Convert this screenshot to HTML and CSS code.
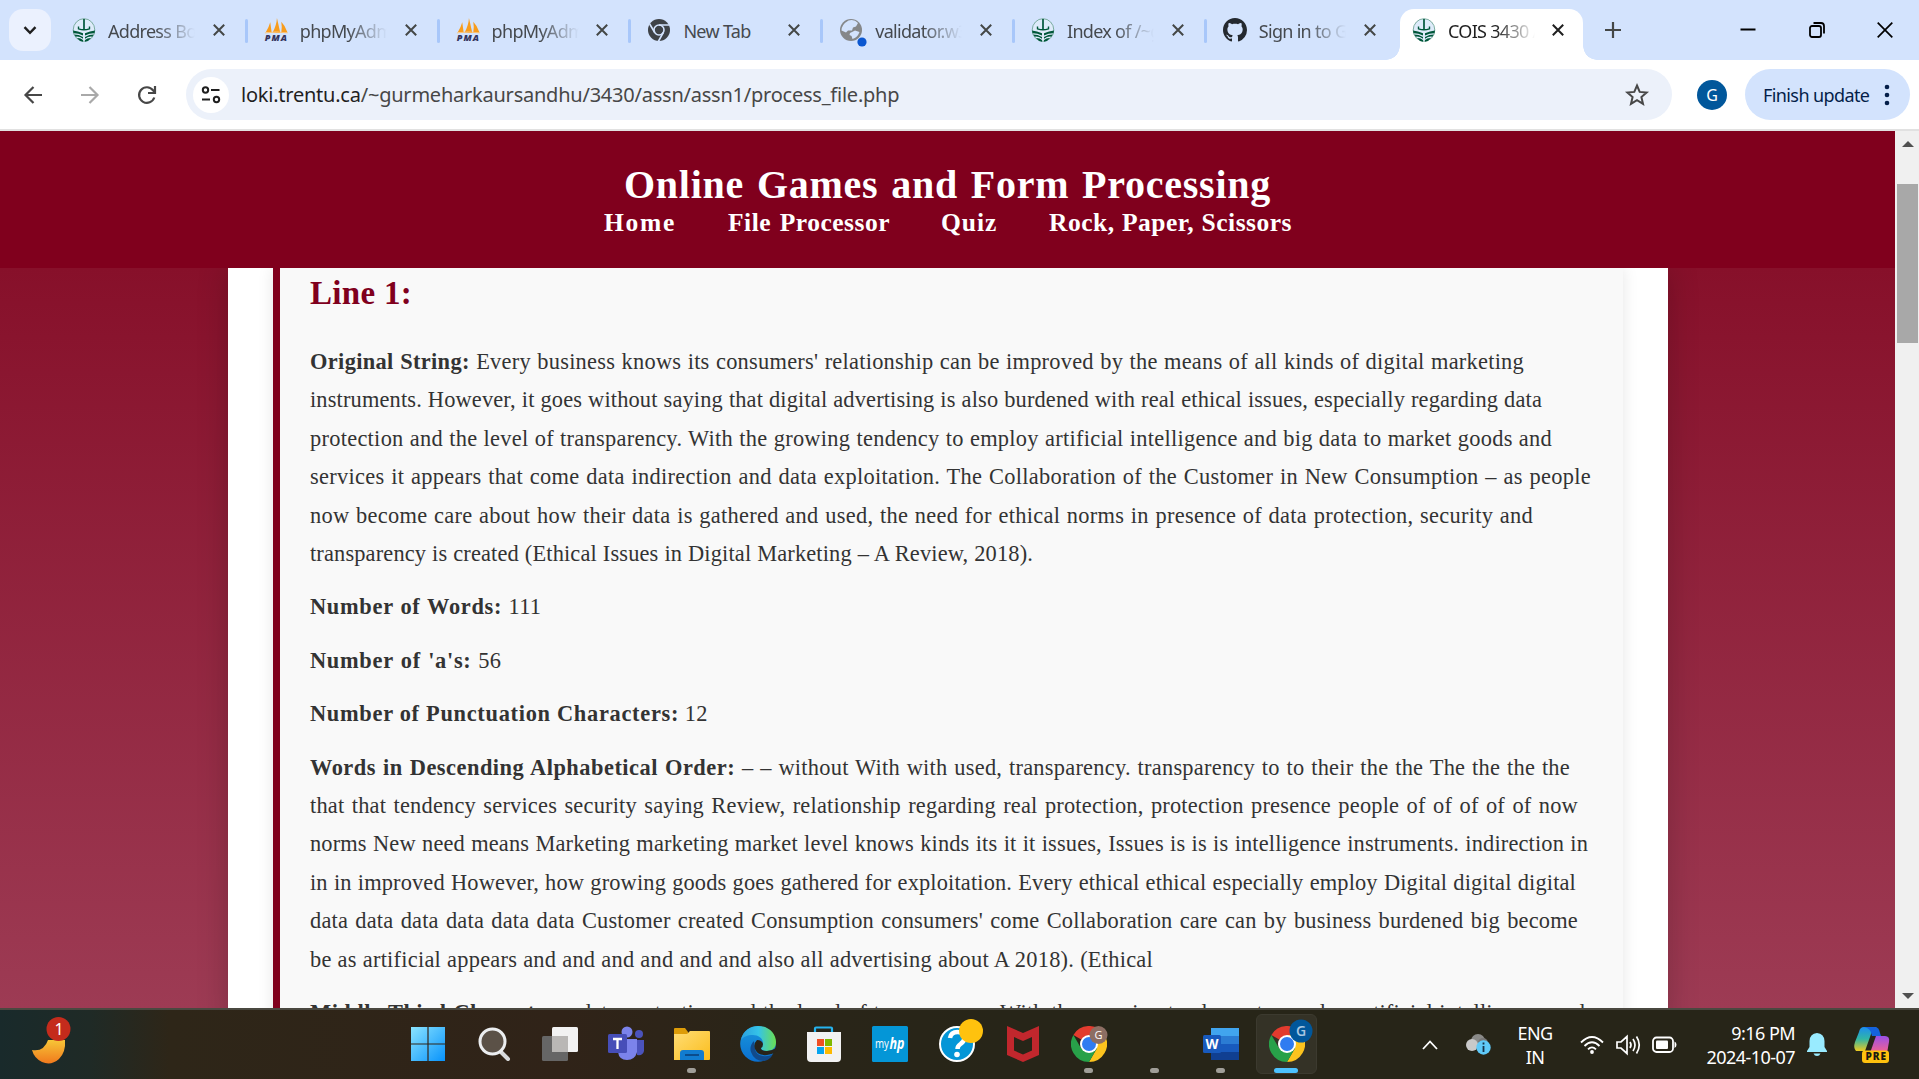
FILE: index.html
```html
<!DOCTYPE html>
<html lang="en">
<head>
<meta charset="utf-8">
<title>COIS 3430</title>
<link rel="stylesheet" href="styles.css">
</head>
<body>
<svg class="defs" aria-hidden="true">
  <defs>
    <linearGradient id="gWin" x1="0" y1="0" x2="1" y2="1"><stop offset="0" stop-color="#8be4ff"/><stop offset="1" stop-color="#0893fb"/></linearGradient>
    <linearGradient id="gMoon" x1="0" y1="0" x2="0" y2="1"><stop offset="0" stop-color="#f7c637"/><stop offset="1" stop-color="#f0791d"/></linearGradient>
    <linearGradient id="gFold" x1="0" y1="0" x2="1" y2="1"><stop offset="0" stop-color="#ffdd75"/><stop offset="1" stop-color="#fbbd1d"/></linearGradient>
    <linearGradient id="gEdgeTop" x1="0" y1="0" x2="1" y2="0"><stop offset="0" stop-color="#2a9fdf"/><stop offset=".5" stop-color="#35c3e8"/><stop offset="1" stop-color="#6ade52"/></linearGradient>
    <linearGradient id="gEdge" x1="0" y1="0" x2="0" y2="1"><stop offset="0" stop-color="#1a97dc"/><stop offset="1" stop-color="#0a6fd0"/></linearGradient>
    <linearGradient id="gCopA" x1="0" y1="0" x2="0" y2="1"><stop offset="0" stop-color="#1c8df0"/><stop offset=".5" stop-color="#31b6a5"/><stop offset="1" stop-color="#efca1f"/></linearGradient>
    <linearGradient id="gCopB" x1="0" y1="0" x2="0" y2="1"><stop offset="0" stop-color="#9a50e8"/><stop offset="1" stop-color="#f6638b"/></linearGradient>
    <symbol id="close" viewBox="0 0 12 12"><path d="M.8.8 11.2 11.2M11.2.8.8 11.2" stroke="currentColor" stroke-width="2" fill="none"/></symbol>
    <symbol id="trent" viewBox="0 0 24 24">
      <ellipse cx="12" cy="12" rx="10.800" ry="11.300" fill="#deebfa" stroke="#6fa595" stroke-width=".9"/>
      <path d="M12 1v11" stroke="#00573a" stroke-width="1.700"/>
      <path d="M6.500 8.500v2.300q5.500 2 11 0V8.500" fill="none" stroke="#00573a" stroke-width="1.400"/>
      <g fill="#00573a"><path d="M1 12.500q5 .5 10 2.700v2.300q-5-2.500-9.500-2.300zM23 12.500q-5 .5-10 2.700v2.300q5-2.500 9.500-2.300z"/><path d="M2.200 16.500q4.500 0 8.800 2.400v1.800q-3.500-2.500-7.200-2zM21.800 16.500q-4.500 0-8.800 2.400v1.800q3.500-2.500 7.200-2z"/><path d="M5 20q3.500-.2 6 2v1.800q-3.500-.4-6-3.800zM19 20q-3.500-.2-6 2v1.800q3.500-.4 6-3.800z"/></g>
    </symbol>
    <symbol id="pma" viewBox="0 0 25 25">
      <path d="M2 14.500Q5 10 6.500 4.500L8 15zM9 15Q13 8 13.500 0L17 15.500zM18 15.500Q19 9 18 4q4 4 6.500 11z" fill="#f89c1c"/>
      <path d="M1 15.500q12-2 23.500 0" stroke="#fbc479" fill="none"/>
      <text x="12.300" y="24" text-anchor="middle" textLength="23" font-family="Open Sans, sans-serif" font-size="9.500" font-style="italic" font-weight="800" fill="#34345c">PMA</text>
    </symbol>
    <symbol id="chrome" viewBox="0 0 36 36">
      <path d="M18 18 2.400 9A18 18 0 0 1 33.600 9H18z" fill="#e33b2e"/>
      <path d="M18 18 33.600 9A18 18 0 0 1 18 36l7.800-13.500z" fill="#fcc31e"/>
      <path d="M18 9H33.600l-7.800 13.500z" fill="#fcc31e"/>
      <path d="M18 18l7.800 4.500L18 36A18 18 0 0 1 2.400 9l7.800 13.500z" fill="#28a149"/>
      <circle cx="18" cy="18" r="9" fill="#fff"/><circle cx="18" cy="18" r="7" fill="#307cf1"/>
    </symbol>
  </defs>
</svg>

<div class="screen">
  <div class="tabstrip">
    <div class="tabsearch"><svg width="14" height="9" viewBox="0 0 14 9"><path d="M1.500 1.200 7 6.800l5.500-5.600" fill="none" stroke="#1f1f1f" stroke-width="2.400"/></svg></div>
    <div class="tabs">
      <div class="tab"><svg class="fav"><use href="#trent"/></svg><span class="label">Address Book</span><svg class="x"><use href="#close"/></svg></div>
      <div class="tab"><svg class="fav"><use href="#pma"/></svg><span class="label">phpMyAdmin</span><svg class="x"><use href="#close"/></svg></div>
      <div class="tab"><svg class="fav"><use href="#pma"/></svg><span class="label">phpMyAdmin</span><svg class="x"><use href="#close"/></svg></div>
      <div class="tab"><svg class="fav" viewBox="0 0 24 24"><circle cx="12" cy="12" r="11" fill="#3e4247"/><g stroke="#d3e3fd" stroke-width="1.600" fill="none"><circle cx="12" cy="12" r="5"/><path d="M12 7h10M7.700 14.500 2.700 6M16.300 14.500l-5 9"/></g><circle cx="12" cy="12" r="3.200" fill="#3e4247"/></svg><span class="label whole">New Tab</span><svg class="x"><use href="#close"/></svg></div>
      <div class="tab"><svg class="fav dotted" viewBox="0 0 24 24"><circle cx="12" cy="12" r="11" fill="#858789"/><path d="M9.500 2.500q6-1.500 9.500 2.500l-2 3.500-3 1-1 3H9l-2 2-4.500-2q0-6 7-10zM13 14l3-1.500 4.500 1.500q-2 5.500-7 7l-1-3-2-1 .5-2z" fill="#d3e3fd"/><circle cx="23" cy="24" r="4.600" fill="#0b57d0"/></svg><span class="label">validator.w3.org</span><svg class="x"><use href="#close"/></svg></div>
      <div class="tab"><svg class="fav"><use href="#trent"/></svg><span class="label">Index of /~gurm</span><svg class="x"><use href="#close"/></svg></div>
      <div class="tab nosep"><svg class="fav" viewBox="0 0 16 16"><path fill="#24292f" d="M8 0C3.580 0 0 3.580 0 8c0 3.540 2.290 6.530 5.470 7.590.4.070.55-.17.55-.38 0-.19-.01-.82-.01-1.490-2.010.37-2.530-.49-2.690-.94-.09-.23-.48-.94-.82-1.130-.28-.15-.68-.52-.01-.53.63-.01 1.080.58 1.230.82.72 1.210 1.870.87 2.330.66.07-.52.28-.87.51-1.070-1.780-.2-3.640-.89-3.640-3.950 0-.87.31-1.590.82-2.150-.08-.2-.36-1.020.08-2.120 0 0 .67-.21 2.200.82.64-.18 1.320-.27 2-.27s1.360.09 2 .27c1.530-1.040 2.200-.82 2.200-.82.44 1.100.16 1.920.08 2.120.51.56.82 1.270.82 2.150 0 3.070-1.870 3.750-3.650 3.950.29.25.54.73.54 1.480 0 1.070-.01 1.930-.01 2.200 0 .21.15.46.55.38A8.010 8.010 0 0 0 16 8c0-4.420-3.580-8-8-8z"/></svg><span class="label">Sign in to GitHub</span><svg class="x"><use href="#close"/></svg></div>
      <div class="tab active"><svg class="fav"><use href="#trent"/></svg><span class="label">COIS 3430 A</span><svg class="x"><use href="#close"/></svg></div>
    </div>
    <svg class="plus" viewBox="0 0 16 16"><path d="M8 0v16M0 8h16" stroke="#444746" stroke-width="2.200"/></svg>
    <div class="winctl">
      <svg width="16" height="16" viewBox="0 0 16 16"><path d="M.5 7.500h15" stroke="#000" stroke-width="2"/></svg>
      <svg width="16" height="16" viewBox="0 0 16 16"><rect x="1" y="4" width="11" height="11" rx="2" fill="none" stroke="#000" stroke-width="1.800"/><path d="M4.500 1H12q3 0 3 3v7.500" fill="none" stroke="#000" stroke-width="1.800"/></svg>
      <svg width="16" height="16" viewBox="0 0 16 16"><path d="M.7.700 15.300 15.300M15.300.700.700 15.300" stroke="#000" stroke-width="1.700"/></svg>
    </div>
  </div>

  <div class="toolbar">
    <svg class="nav" viewBox="0 0 18 18"><path d="M18 9H1.500M9.500 1 1.500 9l8 8" fill="none" stroke="#474747" stroke-width="2.200"/></svg>
    <svg class="nav" viewBox="0 0 18 18"><path d="M0 9h16.500M8.500 1l8 8-8 8" fill="none" stroke="#a9a9a9" stroke-width="2.200"/></svg>
    <svg class="nav" viewBox="0 0 18 18"><path d="M16.300 11.500A7.800 7.800 0 1 1 15 4.200l2 2.800" fill="none" stroke="#474747" stroke-width="2.200"/><path d="M17 0v7h-7" fill="none" stroke="#474747" stroke-width="2.200"/></svg>
    <div class="omnibox">
      <div class="site"><svg width="20" height="18" viewBox="0 0 20 18"><g fill="none" stroke="#1f1f1f" stroke-width="2"><circle cx="4.500" cy="4" r="2.700"/><path d="M10 4h8.500M1 13.500h8"/><circle cx="15.500" cy="13.500" r="2.700"/></g></svg></div>
      <span class="url"><b>loki.trentu.ca</b>/~gurmeharkaursandhu/3430/assn/assn1/process_file.php</span>
      <svg class="star" viewBox="0 0 24 24"><path d="M12 2.500l2.700 6.400 6.900.6-5.200 4.500 1.600 6.800-6-3.600-6 3.600L7.600 14 2.400 9.500l6.900-.6z" fill="none" stroke="#474747" stroke-width="2"/></svg>
    </div>
    <div class="avatar">G</div>
    <div class="update"><span>Finish update</span><svg width="6" height="22" viewBox="0 0 6 22"><g fill="#041e49"><circle cx="3" cy="3" r="2.300"/><circle cx="3" cy="11" r="2.300"/><circle cx="3" cy="19" r="2.300"/></g></svg></div>
  </div>

  <div class="viewport">
    <div class="page">
      <header class="site-header">
        <h1>Online Games and Form Processing</h1>
        <nav><a class="n1">Home</a><a class="n2">File Processor</a><a class="n3">Quiz</a><a class="n4">Rock, Paper, Scissors</a></nav>
      </header>
      <main class="container">
        <section class="card">
          <h2>Line 1:</h2>
          <p><span class="w1214"><b>Original String:</b> Every business knows its consumers' relationship can be improved by the means of all kinds of digital marketing</span>
          <span class="w1232">instruments. However, it goes without saying that digital advertising is also burdened with real ethical issues, especially regarding data</span>
          <span class="w1242">protection and the level of transparency. With the growing tendency to employ artificial intelligence and big data to market goods and</span>
          <span class="w1281">services it appears that come data indirection and data exploitation. The Collaboration of the Customer in New Consumption – as people</span>
          <span class="w1223">now become care about how their data is gathered and used, the need for ethical norms in presence of data protection, security and</span>
          <span class="w723">transparency is created (Ethical Issues in Digital Marketing – A Review, 2018).</span></p>
          <p><span class="w231"><b>Number of Words:</b> 111</span></p>
          <p><span class="w191"><b>Number of 'a's:</b> 56</span></p>
          <p><span class="w397"><b>Number of Punctuation Characters:</b> 12</span></p>
          <p><span class="w1260"><b>Words in Descending Alphabetical Order:</b> – – without With with used, transparency. transparency to to their the the The the the the</span>
          <span class="w1268">that that tendency services security saying Review, relationship regarding real protection, protection presence people of of of of of now</span>
          <span class="w1278">norms New need means Marketing marketing market level knows kinds its it it issues, Issues is is is intelligence instruments. indirection in</span>
          <span class="w1266">in in improved However, how growing goods goes gathered for exploitation. Every ethical ethical especially employ Digital digital digital</span>
          <span class="w1268">data data data data data data Customer created Consumption consumers' come Collaboration care can by business burdened big become</span>
          <span class="w843">be as artificial appears and and and and and and also all advertising about A 2018). (Ethical</span></p>
          <p><span class="w1275"><b>Middle Third Characters:</b> data protection and the level of transparency. With the growing tendency to employ artificial intelligence and</span></p>
        </section>
      </main>
    </div>
    <div class="scrollbar"><i class="up"></i><div class="thumb"></div><i class="down"></i></div>
  </div>

  <div class="taskbar">
    <div class="weather"><svg width="40" height="54" viewBox="0 0 40 54"><path d="M1 36q12 2 16-10l17 0q1 12-6 19-8 7-17 3Q3 44 1 36z" fill="url(#gMoon)"/><ellipse cx="27.500" cy="15" rx="12" ry="12" fill="#c42b1c"/><text x="28" y="21" text-anchor="middle" font-family="Noto Sans, sans-serif" font-size="16" fill="#fff">1</text></svg></div>
    <div class="apps">
      <div class="app"><svg viewBox="0 0 36 36"><g fill="url(#gWin)"><path d="M1 1h16.400v16.500H1zM18.600 1H35v16.500H18.600zM1 18.600h16.400V35H1zM18.600 18.600H35V35H18.600z"/></g></svg></div>
      <div class="app"><svg viewBox="0 0 36 36"><path d="M24 25l8 8" stroke="#d8dadd" stroke-width="4" stroke-linecap="round"/><circle cx="16.500" cy="15.500" r="12.500" fill="#5b5147" stroke="#eceef0" stroke-width="3"/></svg></div>
      <div class="app"><svg viewBox="0 0 36 36"><rect x="10" y="1" width="26" height="25" rx="1.500" fill="#f2f2f2"/><rect x="0" y="10" width="26" height="25" rx="1.500" fill="#666"/><path d="M10 10h16v16H10z" fill="#b9b7b5"/></svg></div>
      <div class="app"><svg viewBox="0 0 36 36"><circle cx="31" cy="8" r="4" fill="#4b53bc"/><path d="M26 14h10v11q-1 5-7 4z" fill="#4b53bc"/><circle cx="19" cy="6" r="5.500" fill="#7b83eb"/><path d="M10 13h19v13q-2 8-10 8-8 0-9-8z" fill="#7b83eb"/><rect x="0" y="8" width="19" height="19" rx="1.500" fill="#464eb8"/><path d="M5 13h9M9.500 13v10" stroke="#fff" stroke-width="2.300"/></svg></div>
      <div class="app run"><svg viewBox="0 0 36 36"><path d="M0 3q0-1 1-1h10l3 4v4H0z" fill="#dd9c08"/><path d="M0 8h13l3-3h19q1 0 1 1v27q0 1-1 1H0z" fill="url(#gFold)"/><path d="M6 34V27q0-3 3-3h18q3 0 3 3v7z" fill="#117cd0"/><path d="M11 29h14" stroke="#0b4c8c" stroke-width="2"/></svg></div>
      <div class="app"><svg viewBox="0 0 36 36"><circle cx="18" cy="18" r="17.800" fill="url(#gEdge)"/><path d="M1 14C3 4 11 0 18 0c11 0 18 8 18 16 0 6-4 9-9 9-3 0-6-1-6-3 0-1 2-2 2-5 0-5-5-8-10-8C7 9 3 11 1 14z" fill="url(#gEdgeTop)"/><path d="M14 15q-5 5-3 11 3 9 13 9 6-1 9-7-5 3-10 2-7-1-8-7-1-4-1-8z" fill="#114a8b"/><path d="M17 14q-4 4-2 9 3 7 12 6 6-1 11-4l-2-3q-4 3-9 3-6 0-6-3 2-1 2-4-1-4-6-4z" fill="#28241a"/></svg></div>
      <div class="app"><svg viewBox="0 0 36 36"><path d="M9 7V2.500q0-1 1-1h15q1 0 1 1V7" fill="none" stroke="#25b3ee" stroke-width="2.200"/><path d="M1 6h34v26q0 4-4 4H5q-4 0-4-4z" fill="#f2f2f2"/><path d="M11 13h7v7h-7z" fill="#f04f24"/><path d="M19 13h7v7h-7z" fill="#7fb900"/><path d="M11 21h7v7h-7z" fill="#05a4ef"/><path d="M19 21h7v7h-7z" fill="#fdb900"/></svg></div>
      <div class="app"><svg viewBox="0 0 36 36"><rect x="0" y="0" width="36" height="36" rx="1.500" fill="#0496d7"/><text x="3" y="22" font-family="Open Sans, sans-serif" font-size="12" textLength="14" lengthAdjust="spacingAndGlyphs" fill="#fff">my</text><text x="17.500" y="23" font-family="Open Sans, sans-serif" font-size="16" font-style="italic" font-weight="700" textLength="15" lengthAdjust="spacingAndGlyphs" fill="#fff">hp</text></svg></div>
      <div class="app"><svg viewBox="0 0 36 36"><circle cx="18" cy="18" r="17" fill="#0496d7" stroke="#fff" stroke-width="2"/><path d="M11 12q1-6 7.500-6 7 0 7 6 0 3-4 6-3 2-3 5" fill="none" stroke="#fff" stroke-width="4.500"/><circle cx="18" cy="28.500" r="2.800" fill="#fff"/><circle cx="32" cy="5" r="12" fill="#ffc20e"/></svg></div>
      <div class="app"><svg viewBox="0 0 36 36"><path d="M2 0l16 7L34 0v29l-16 7-16-7zM9 11v13.500l9 4 9-4V11l-9 4z" fill="#c1272d" fill-rule="evenodd"/></svg></div>
      <div class="app run"><svg viewBox="0 0 36 36"><use href="#chrome"/><circle cx="27.500" cy="9" r="9" fill="#8d6e63"/><text x="27.500" y="13" text-anchor="middle" font-family="Open Sans, sans-serif" font-size="11" fill="#fff">G</text></svg></div>
      <div class="app run"></div>
      <div class="app run"><svg viewBox="0 0 36 36"><path d="M8 2h28v8H8z" fill="#41a5ee"/><path d="M8 10h28v8H8z" fill="#2b7cd3"/><path d="M8 18h28v8H8z" fill="#185abd"/><path d="M8 26h28v8H8z" fill="#103f91"/><rect x="0" y="9" width="18" height="18" rx="1.500" fill="#185abd"/><text x="9" y="22.500" text-anchor="middle" font-family="Open Sans, sans-serif" font-size="14" font-weight="700" textLength="13" lengthAdjust="spacingAndGlyphs" fill="#fff">W</text></svg></div>
      <div class="app current"><svg viewBox="0 0 36 36"><use href="#chrome"/><circle cx="32" cy="5" r="11.500" fill="#01579b"/><text x="32" y="10" text-anchor="middle" font-family="Open Sans, sans-serif" font-size="14" font-weight="600" fill="#a9c8e2">G</text></svg></div>
    </div>
    <div class="tray">
      <svg width="16" height="10" viewBox="0 0 16 10"><path d="M1 9l7-7.500L15 9" fill="none" stroke="#fff" stroke-width="1.800"/></svg>
      <svg class="cloud" width="25" height="21" viewBox="0 0 25 21"><circle cx="12" cy="7" r="7" fill="#8a8a88"/><circle cx="6" cy="11" r="6" fill="#c9c9c9"/><circle cx="17" cy="9" r="5" fill="#777"/><circle cx="17.500" cy="13.500" r="7.200" fill="#5fc9f8"/><path d="M17.500 12v6M17.500 8.500v2" stroke="#16324a" stroke-width="1.800"/></svg>
      <div class="lang">ENG<br>IN</div>
      <svg class="wifi" width="24" height="18" viewBox="0 0 24 18"><g fill="none" stroke="#fff" stroke-width="1.800"><path d="M1 6.500q11-11 22 0M4.500 10q7.500-7.500 15 0M8 13.300q4-4 8 0"/></g><circle cx="12" cy="16" r="1.900" fill="#fff"/></svg>
      <svg class="vol" width="25" height="20" viewBox="0 0 25 20"><g fill="none" stroke="#fff" stroke-width="1.700"><path d="M1 7h4l6-5.500v17L5 13H1zM14 7q2 3 0 6M17 4q4 6 0 12M20.500 1.500q5.500 8.500 0 17"/></g></svg>
      <svg class="bat" width="25" height="18" viewBox="0 0 25 18"><rect x="1" y="1.500" width="20" height="14.500" rx="3.500" fill="none" stroke="#fff" stroke-width="1.800"/><rect x="4" y="4.500" width="12" height="8.500" rx="1" fill="#fff"/><path d="M22.500 5.500q2 1 2 3.200t-2 3.300z" fill="#fff"/></svg>
      <div class="clock">9:16 PM<br>2024-10-07</div>
      <svg class="bell" width="20" height="23" viewBox="0 0 20 23"><path d="M10 0q7 .5 7.500 8v6l2.500 4v1H0v-1l2.500-4V8Q3 .5 10 0zM6.500 20.500h7q-1 2.500-3.500 2.500t-3.500-2.500z" fill="#99ebff"/></svg>
      <svg class="copilot" width="36" height="36" viewBox="0 0 36 36"><path d="M10 0h13q-5 2-7 10l-5 14H2q-3-3-1-9L5 5q1-5 5-5z" fill="url(#gCopA)"/><path d="M10 0h11q4 0 5 6l1 3h-9q-1-8-8-9z" fill="#1462dc"/><path d="M22 9h9q5 0 4 6l-2 11H16z" fill="url(#gCopB)"/><rect x="8" y="23.500" width="27" height="12.500" rx="3" fill="#ffc20e"/><text x="21.500" y="33.300" text-anchor="middle" font-family="Open Sans, sans-serif" font-size="10" font-weight="800" textLength="20" fill="#1c1a10">PRE</text></svg>
    </div>
  </div>
</div>
</body>
</html>
```

FILE: styles.css
```css
* { box-sizing: border-box; }
body { margin: 0; }
svg { flex: none; overflow: visible; display: block; }
.defs { position: absolute; width: 0; height: 0; }
.screen {
  width: 1919px; height: 1079px; overflow: hidden;
  display: flex; flex-direction: column;
  font-family: "Noto Sans", "Open Sans", sans-serif;
}

/* Tab strip */
.tabstrip { height: 60px; flex: none; background: #d3e3fd; display: flex; align-items: center; }
.tabsearch { width: 42px; height: 42px; margin-left: 9px; border-radius: 14px; background: #ebf1fe; display: flex; align-items: center; justify-content: center; }
.tabs { display: flex; height: 60px; margin-left: 5px; }
.tab { width: 191.800px; height: 60px; padding: 0 23px 0 16px; display: flex; align-items: center; position: relative; color: #45494e; }
.tab:not(.active):not(.nosep)::after { content: ""; position: absolute; right: 0; top: 19px; width: 3px; height: 24px; border-radius: 2px; background: #a8c7fa; }
.fav { width: 24px; height: 24px; }
.label { font-size: 18px; letter-spacing: -0.700px; width: 87px; margin-left: 12px; overflow: hidden; white-space: nowrap; line-height: 28px; margin-top: 2px;
  -webkit-mask-image: linear-gradient(90deg, #000 55%, transparent 100%); mask-image: linear-gradient(90deg, #000 55%, transparent 100%); }
.label.whole { -webkit-mask-image: none; mask-image: none; }
.x { width: 12px; height: 12px; margin-left: auto; color: #444746; }
.tab.active { width: 183px; margin-top: 9px; height: 51px; margin-left: 1.400px; padding: 0 19px 9px 12px; background: #fff; border-radius: 14px 14px 0 0; color: #1f1f1f; }
.tab.active .x { color: #1f1f1f; }
.tab.active::before, .tab.active::after { content: ""; position: absolute; bottom: 0; width: 14px; height: 14px; }
.tab.active::before { left: -14px; background: radial-gradient(circle at 0 0, transparent 13.500px, #fff 14px); }
.tab.active::after { right: -14px; background: radial-gradient(circle at 100% 0, transparent 13.500px, #fff 14px); }
.plus { width: 16px; height: 16px; margin-left: 22px; }
.winctl { margin-left: auto; margin-right: 26px; display: flex; gap: 52.500px; }

/* Toolbar */
.toolbar { height: 71px; flex: none; background: #fff; border-bottom: 2px solid #e1e1e1; display: flex; align-items: center; padding-left: 24px; }
.nav { width: 18px; height: 18px; margin-right: 39px; }
.nav:nth-child(3) { margin-right: 30px; }
.omnibox { width: 1486px; height: 51px; border-radius: 26px; background: #ecf1fa; display: flex; align-items: center; padding-left: 7px; }
.site { width: 36px; height: 36px; border-radius: 50%; background: #fff; display: flex; align-items: center; justify-content: center; }
.url { margin-left: 12px; font-size: 20px; letter-spacing: -0.230px; color: #474747; white-space: nowrap; }
.url b { font-weight: 400; color: #1f1f1f; }
.star { width: 24px; height: 24px; margin-left: auto; margin-right: 23px; }
.avatar { width: 30px; height: 30px; margin-left: 25px; border-radius: 50%; background: #01579b; color: #fff; font-size: 16px; display: flex; align-items: center; justify-content: center; }
.update { width: 165px; height: 51px; margin-left: 18px; border-radius: 26px; background: #d3e3fd; color: #041e49; font-size: 18px; letter-spacing: -0.600px; display: flex; align-items: center; padding-left: 18px; white-space: nowrap; }
.update svg { margin-left: auto; margin-right: 20px; }

/* Web page */
.viewport { height: 877px; flex: none; display: flex; overflow: hidden; }
.page { width: 1895px; background: linear-gradient(#80001d 0, #87102a 137px, #9d3b54 877px); font-family: "Liberation Serif", serif; overflow: hidden; height: 877px; }
.site-header { height: 137px; background: #80001d; color: #fff; padding-top: 31px; text-align: center; position: relative; z-index: 1; }
h1 { margin: 0 auto; width: 647px; font-size: 40px; letter-spacing: .75px; line-height: 45px; font-weight: 700; text-align-last: justify; white-space: nowrap; }
.site-header nav { display: flex; margin-left: 604px; margin-top: 1px; font-size: 25.500px; letter-spacing: .5px; font-weight: 700; line-height: 30px; gap: 51px; white-space: nowrap; text-align-last: justify; }
.n1 { width: 73px; letter-spacing: 1.700px; } .n2 { width: 162px; } .n3 { width: 57px; letter-spacing: 1px; } .n4 { width: 243px; }
.container { width: 1440px; margin-left: 228px; padding: 0 45px; background: #fff; box-shadow: 0 0 30px rgba(0, 0, 0, .2); }
.card { height: 760px; border-left: 7px solid #80001d; background: #f9f9f9; padding: 5px 0 0 30px; box-shadow: 0 0 15px rgba(0, 0, 0, .1); color: #333; }
h2 { margin: 0 0 30px; font-size: 33px; line-height: 40px; font-weight: 700; color: #80001d; letter-spacing: .3px; }
.card p { margin: 0 0 15px; font-size: 22.400px; line-height: 38.400px; letter-spacing: .15px; }
.card p b { letter-spacing: .7px; }
.card p span { display: block; white-space: nowrap; text-align-last: justify; }
.card .w1214 b { letter-spacing: .35px; }
.card .w1260 b, .card .w1275 b { letter-spacing: .5px; }
.w1214 { width: 1214px; letter-spacing: .25px; } .w1232 { width: 1232px; } .w1242 { width: 1242px; letter-spacing: .28px; } .w1281 { width: 1281px; letter-spacing: .3px; }
.w1223 { width: 1223px; letter-spacing: .3px; } .w723 { width: 723px; } .w231 { width: 231px; } .w191 { width: 191px; }
.w397 { width: 397px; } .w1260 { width: 1260px; letter-spacing: .25px; } .w1268 { width: 1268px; letter-spacing: .2px; } .w1278 { width: 1278px; }
.w1266 { width: 1266px; } .w843 { width: 843px; letter-spacing: .25px; } .w1275 { width: 1275px; }
.scrollbar { width: 24px; background: #f0f0f0; display: flex; flex-direction: column; align-items: center; padding-left: 1px; }
.up, .down { width: 0; height: 0; border: 6px solid transparent; border-top: 0; border-bottom: 6px solid #505050; margin-top: 10px; }
.thumb { width: 21px; height: 159px; margin-top: 37px; background: #a8a8a8; }
.down { border-top: 6px solid #505050; border-bottom: 0; margin-top: auto; margin-bottom: 9px; }

/* Taskbar */
.taskbar { height: 71px; flex: none; border-top: 2px solid #4a4840; background: linear-gradient(90deg, #192a2b 0, #1f2a26 90px, #2e2618 170px, #302318 560px, #2a2518 760px, #272518 1000px); display: flex; color: #fff; }
.weather { width: 394.500px; padding: 0 0 0 31px; }
.weather svg { margin-top: 4px; }
.apps { display: flex; }
.app { width: 66.150px; height: 69px; padding: 16px 15px 0; position: relative; }
.app svg { width: 36px; height: 36px; position: relative; }
.run::after, .current::after { content: ""; position: absolute; left: 28px; bottom: 6px; width: 9px; height: 5px; border-radius: 3px; background: #a09e98; }
.current::before { content: ""; position: absolute; inset: 4px 3px 5px 2px; border: 1px solid #3c3a2f; border-radius: 6px; background: #343226; }
.current::after { left: 20px; width: 24px; background: #4cc2ff; }
.tray { margin-left: auto; display: flex; align-items: center; padding-right: 29px; font-size: 18px; line-height: 24px; letter-spacing: -0.550px; }
.cloud { margin-left: 28px; }
.lang { width: 40px; margin-left: 24px; text-align: center; }
.wifi { margin-left: 25px; }
.vol { margin-left: 12px; }
.bat { margin-left: 11px; }
.clock { width: 118px; text-align: right; white-space: nowrap; }
.bell { margin-left: 12px; }
.copilot { margin-left: 27px; }
```
